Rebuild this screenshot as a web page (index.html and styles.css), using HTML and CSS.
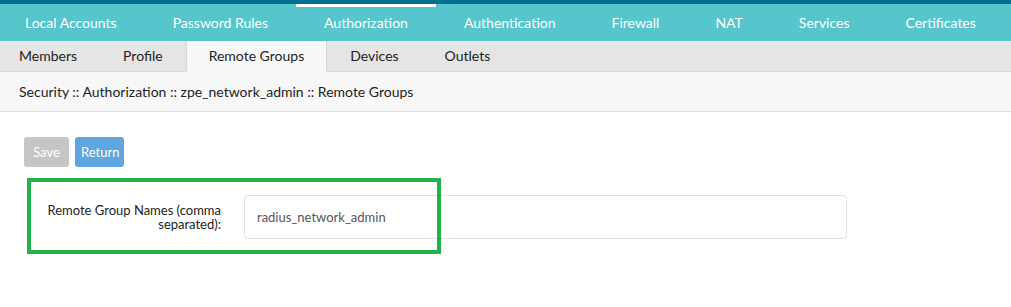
FILE: index.html
```html
<!DOCTYPE html>
<html lang="en">
<head>
    <meta charset="UTF-8">
    <meta name="viewport" content="width=device-width, initial-scale=1.0">
    <title>Security :: Authorization</title>
    <link rel="stylesheet" href="styles.css">
</head>
<body>
    <div class="topline"></div>
    <ul class="main-nav">
        <li>Local Accounts</li>
        <li>Password Rules</li>
        <li class="active">Authorization</li>
        <li>Authentication</li>
        <li>Firewall</li>
        <li>NAT</li>
        <li>Services</li>
        <li>Certificates</li>
    </ul>
    <ul class="sub-nav">
        <li>Members</li>
        <li>Profile</li>
        <li class="active">Remote Groups</li>
        <li>Devices</li>
        <li>Outlets</li>
    </ul>
    <div class="breadcrumb">Security :: Authorization :: zpe_network_admin :: Remote Groups</div>

    <div class="content">
        <div class="buttons">
            <button class="btn btn-save" disabled>Save</button>
            <button class="btn btn-return">Return</button>
        </div>
        <form class="form-row">
            <label for="groups">Remote Group Names (comma separated):</label>
            <input type="text" id="groups" name="groups" value="radius_network_admin">
            <div class="highlight"></div>
        </form>
    </div>
</body>
</html>
```

FILE: styles.css
```css
body {
    margin: 0;
    font-family: Lato, "Open Sans", sans-serif;
    color: #222;
    background-color: #fff;
}
.topline {
    height: 4px;
    background-color: #036f8f;
}
ul {
    list-style-type: none;
    margin: 0;
    padding: 0;
    display: flex;
}
.main-nav {
    height: 37px;
    background-color: #56c5cc;
    padding-left: 0;
    margin-left: -3px;
}
.main-nav li {
    padding: 0 28px;
    line-height: 37px;
    font-size: 14px;
    color: #fff;
    border-top: 3px solid transparent;
    margin-top: 0;
    line-height: 31px;
    padding-bottom: 3px;
}
.main-nav li.active {
    border-top-color: #fff;
}
.sub-nav {
    height: 30px;
    background-color: #e5e5e5;
    border-bottom: 1px solid #d8d8d8;
    margin-left: -4px;
}
.sub-nav li {
    padding: 0 23px;
    line-height: 30px;
    font-size: 14px;
    color: #222;
}
.sub-nav li.active {
    background-color: #f8f8f8;
    height: 31px;
    border-left: 1px solid #d8d8d8;
    border-right: 1px solid #d8d8d8;
    padding: 0 22px;
}
.breadcrumb {
    height: 39px;
    line-height: 40px;
    padding-left: 19px;
    background-color: #f8f8f8;
    border-bottom: 1px solid #dcdcdc;
    font-size: 14px;
    color: #222;
}
.content {
    padding: 25px 24px;
}
.buttons {
    display: flex;
    gap: 6px;
}
.btn {
    height: 30px;
    padding: 0 6px;
    border: none;
    border-radius: 3px;
    font-family: Lato, "Open Sans", sans-serif;
    font-size: 13px;
    color: #fff;
}
.btn-save {
    background-color: #c6c6c6;
    width: 45px;
}
.btn-return {
    background-color: #5fa5e0;
    width: 49px;
}
.form-row {
    position: relative;
    display: flex;
    align-items: center;
    margin-top: 28px;
}
.form-row label {
    width: 197px;
    text-align: right;
    font-size: 13px;
    line-height: 14px;
    color: #222;
    padding-right: 23px;
    box-sizing: border-box;
    width: 220px;
}
.form-row input {
    width: 603px;
    height: 44px;
    box-sizing: border-box;
    padding: 0 12px;
    border: 1px solid #e2e2e2;
    border-radius: 4px;
    font-family: Lato, "Open Sans", sans-serif;
    font-size: 13px;
    color: #555;
}
.highlight {
    position: absolute;
    left: 3px;
    top: -17px;
    width: 414px;
    height: 76px;
    box-sizing: border-box;
    border: 4px solid #22b14c;
}
```
